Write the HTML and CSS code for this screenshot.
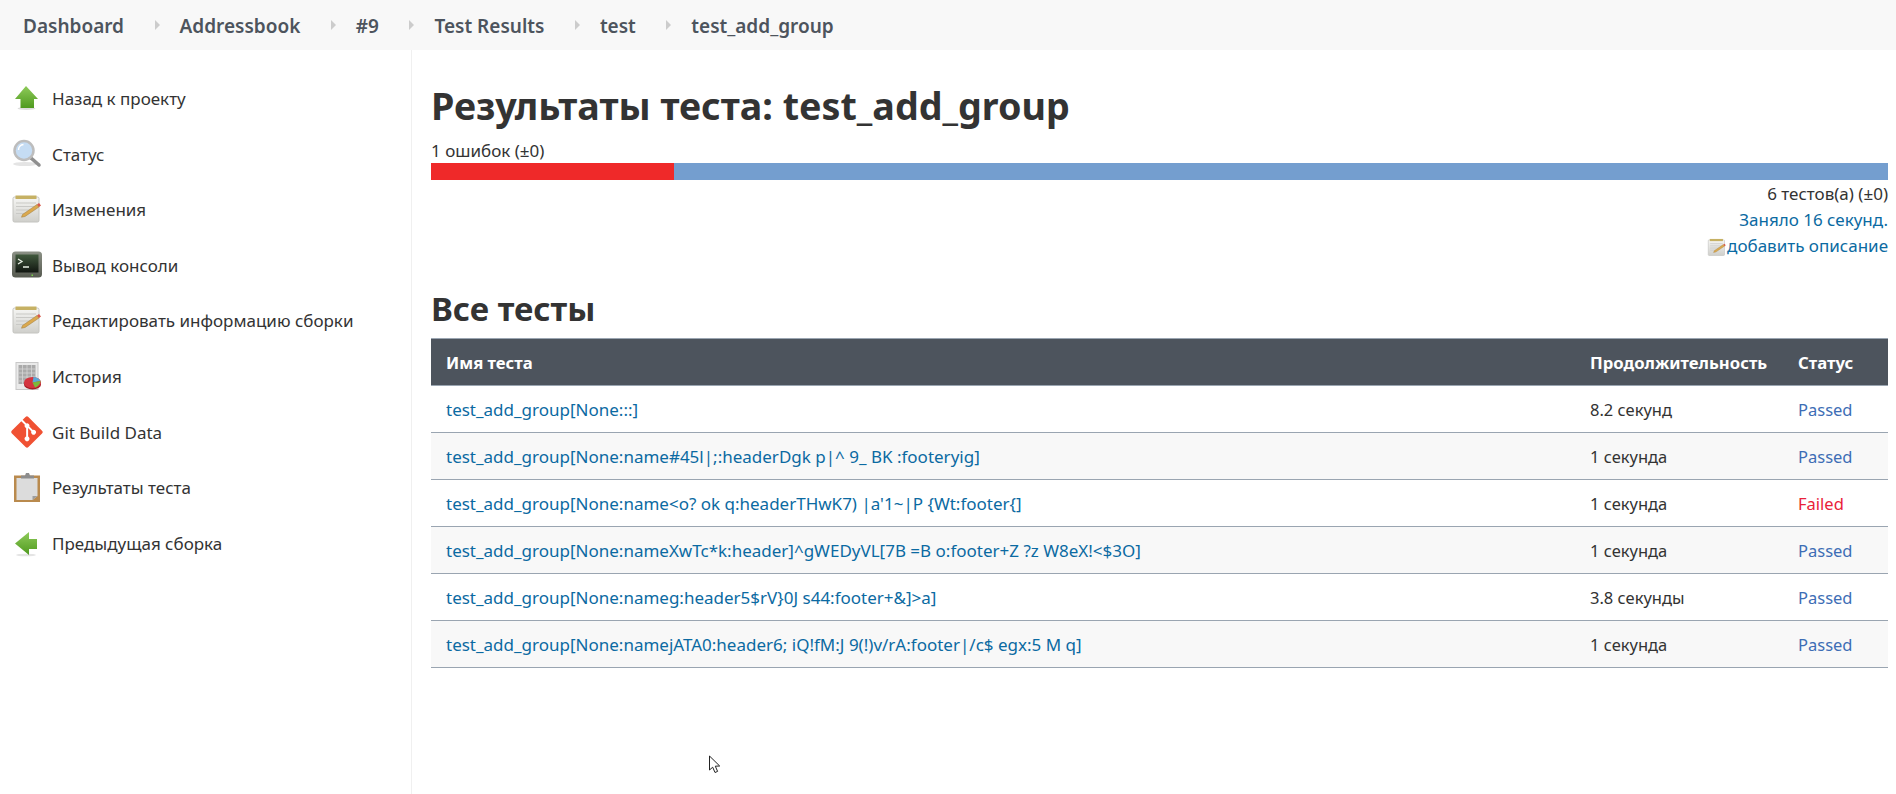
FILE: index.html
```html
<!DOCTYPE html>
<html>
<head>
  <meta charset="utf-8" />
  <title>Результаты теста: test_add_group</title>
  <link rel="stylesheet" href="styles.css">
</head>
<body>
  <!-- shared icon pieces -->
  <svg class="defs" width="0" height="0">
    <defs>
      <linearGradient id="green" x1="0" y1="0" x2="0" y2="1">
        <stop offset="0" stop-color="#8fcb5a"/>
        <stop offset="1" stop-color="#4f9a1f"/>
      </linearGradient>
      <linearGradient id="paper" x1="0" y1="0" x2="0" y2="1">
        <stop offset="0" stop-color="#f6f6f4"/>
        <stop offset="1" stop-color="#cfcfcb"/>
      </linearGradient>
      <linearGradient id="screen" x1="0" y1="0" x2="0" y2="1">
        <stop offset="0" stop-color="#41593d"/>
        <stop offset="1" stop-color="#111611"/>
      </linearGradient>
      <linearGradient id="case" x1="0" y1="0" x2="0" y2="1">
        <stop offset="0" stop-color="#8b9085"/>
        <stop offset="1" stop-color="#565a50"/>
      </linearGradient>
      <symbol id="i-notepad" viewBox="0 0 32 32">
        <rect x="2" y="3" width="26" height="25" rx="1.500" fill="url(#paper)" stroke="#c4c4c0"/>
        <rect x="4.500" y="1.500" width="21" height="3.500" fill="#c6b164"/>
        <path d="M5 9h20M5 12.500h20M5 16h15M5 19.500h9" stroke="#c9c9c6" stroke-width="1.100"/>
        <path d="M11.500 20.500 26 10.500l2 2.500-14 9.500-3.500.7z" fill="#dba94e" stroke="#9c7a3c" stroke-width=".5"/>
        <path d="M26 10.500l2-1.500 2 2.500-2 1.500z" fill="#d85a4a"/>
      </symbol>
    </defs>
  </svg>

  <nav class="topbar">
    <a class="crumb" href="#">Dashboard</a><span class="sep"></span>
    <a class="crumb" href="#">Addressbook</a><span class="sep"></span>
    <a class="crumb" href="#">#9</a><span class="sep"></span>
    <a class="crumb" href="#">Test Results</a><span class="sep"></span>
    <a class="crumb" href="#">test</a><span class="sep"></span>
    <a class="crumb" href="#">test_add_group</a>
  </nav>

  <div class="layout">
    <aside class="sidebar">
      <a class="task" href="#">
        <svg class="task-icon" viewBox="0 0 32 32"><ellipse cx="15.500" cy="25.500" rx="9" ry="1.500" fill="#ddd"/><path d="M15 3 27 16h-4v9H9.500v-9H4z" fill="url(#green)"/></svg>
        Назад к проекту
      </a>
      <a class="task" href="#">
        <svg class="task-icon" viewBox="0 0 32 32"><ellipse cx="14" cy="26" rx="12" ry="2" fill="#e4e4e4"/><path d="M20 20 28 27" stroke="#8f8f8f" stroke-width="3.500" stroke-linecap="round"/><circle cx="13" cy="12.500" r="9.500" fill="#c5dcf3" stroke="#bdbdbd" stroke-width="2.500"/><path d="M7.500 12a5.500 5.500 0 0 1 5-5.500" stroke="#fff" stroke-width="1.500" fill="none"/></svg>
        Статус
      </a>
      <a class="task" href="#">
        <svg class="task-icon"><use href="#i-notepad"/></svg>
        Изменения
      </a>
      <a class="task" href="#">
        <svg class="task-icon" viewBox="0 0 32 32"><rect x="1" y="1.500" width="30" height="26" rx="3.500" fill="url(#case)"/><rect x="4.500" y="4.500" width="23" height="18" fill="url(#screen)"/><path d="M7 9l4 2.500L7 14M12 17h6" stroke="#e8efe4" stroke-width="1.300" fill="none"/><rect x="20.500" y="24.500" width="1.500" height="1.500" fill="#7bd14a"/></svg>
        Вывод консоли
      </a>
      <a class="task" href="#">
        <svg class="task-icon"><use href="#i-notepad"/></svg>
        Редактировать информацию сборки
      </a>
      <a class="task" href="#">
        <svg class="task-icon" viewBox="0 0 32 32"><rect x="5" y="1.500" width="22" height="27" fill="#eaeaea" stroke="#c8c8c8"/><path d="M7.500 4h17v19h-17z" fill="#aaa"/><path d="M7.500 8h17M7.500 12h17M7.500 16h17M7.500 20h17M11.500 4v19M16 4v19M20.500 4v19" stroke="#d6d6d6" stroke-width=".8"/><ellipse cx="21.500" cy="23.500" rx="8.500" ry="5" fill="#a81c26"/><ellipse cx="21.500" cy="21.500" rx="8.500" ry="5.500" fill="#d4343f"/><path d="M21.500 21.500l1-5.500c3 0 6 2 7 4z" fill="#5aa8d8"/><path d="M21.500 21.500l8-1.500c.5 2-3 6-5.500 6.500z" fill="#7bb83a"/></svg>
        История
      </a>
      <a class="task" href="#">
        <svg class="task-icon" viewBox="-1 -1 94 94"><path fill="#f05133" d="M90.156 41.965 50.036 1.848a5.918 5.918 0 0 0-8.372 0l-8.328 8.332 10.566 10.566a7.030 7.030 0 0 1 7.230 1.684 7.034 7.034 0 0 1 1.669 7.277l10.187 10.184a7.028 7.028 0 0 1 7.278 1.672 7.040 7.040 0 0 1 0 9.957 7.050 7.050 0 0 1-9.965 0 7.044 7.044 0 0 1-1.528-7.660l-9.500-9.497V59.360a7.040 7.040 0 0 1 1.860 11.290 7.040 7.040 0 0 1-9.957 0 7.040 7.040 0 0 1 0-9.958 7.060 7.060 0 0 1 2.304-1.539V33.926a7.049 7.049 0 0 1-3.820-9.234L29.242 14.272 1.730 41.777a5.925 5.925 0 0 0 0 8.371L41.852 90.270a5.925 5.925 0 0 0 8.370 0l39.934-39.934a5.925 5.925 0 0 0 0-8.371"/></svg>
        Git Build Data
      </a>
      <a class="task" href="#">
        <svg class="task-icon" viewBox="0 0 32 32"><rect x="3" y="3.500" width="26" height="26.500" fill="#b98a4e"/><path d="M5.500 6h21v18l-5 4H5.500z" fill="#dcdcdc"/><path d="M21.500 28l5-4h-5z" fill="#9e9e9e"/><path d="M10 6.500V3.500h4l1-2.500h3l1 2.500h4v3z" fill="#8d8d8d"/></svg>
        Результаты теста
      </a>
      <a class="task" href="#">
        <svg class="task-icon" viewBox="0 0 32 32"><ellipse cx="15" cy="27" rx="10" ry="1.300" fill="#e4e4e4"/><path d="M4 15.500 18 4v7h8v10h-8v6z" fill="url(#green)"/></svg>
        Предыдущая сборка
      </a>
    </aside>

    <main class="content">
      <h1 class="title">Результаты теста: test_add_group</h1>
      <div class="fail-count">1 ошибок (±0)</div>
      <div class="bar"><div class="bar-fail"></div></div>
      <div class="summary">
        <div>6 тестов(а) (±0)</div>
        <div><a href="#">Заняло 16 секунд.</a></div>
        <div><a class="edit-link" href="#"><svg class="edit-icon"><use href="#i-notepad"/></svg>добавить описание</a></div>
      </div>

      <h2 class="section">Все тесты</h2>
      <table class="tests">
        <thead>
          <tr><th>Имя теста</th><th class="col-time">Продолжительность</th><th class="col-status">Статус</th></tr>
        </thead>
        <tbody>
          <tr><td><a href="#">test_add_group[None:::]</a></td><td class="cell-sm">8.2 секунд</td><td class="cell-sm passed">Passed</td></tr>
          <tr><td><a href="#">test_add_group[None:name#45l|;:headerDgk p|^ 9_ BK :footeryig]</a></td><td class="cell-sm">1 секунда</td><td class="cell-sm passed">Passed</td></tr>
          <tr><td><a href="#">test_add_group[None:name&lt;o? ok q:headerTHwK7) |a'1~|P {Wt:footer{]</a></td><td class="cell-sm">1 секунда</td><td class="cell-sm failed">Failed</td></tr>
          <tr><td><a href="#">test_add_group[None:nameXwTc*k:header]^gWEDyVL[7B =B o:footer+Z ?z W8eX!&lt;$3O]</a></td><td class="cell-sm">1 секунда</td><td class="cell-sm passed">Passed</td></tr>
          <tr><td><a href="#">test_add_group[None:nameg:header5$rV}0J s44:footer+&amp;]&gt;a]</a></td><td class="cell-sm">3.8 секунды</td><td class="cell-sm passed">Passed</td></tr>
          <tr><td><a href="#">test_add_group[None:namejATA0:header6; iQ!fM:J 9(!)v/rA:footer|/c$ egx:5 M q]</a></td><td class="cell-sm">1 секунда</td><td class="cell-sm passed">Passed</td></tr>
        </tbody>
      </table>
    </main>
  </div>

  <!-- mouse pointer caught in the screenshot -->
  <svg class="pointer" width="14" height="20" viewBox="0 0 14 20"><path d="M1.500 1v14l3.200-2.800 2.300 5.300 2.600-1.100-2.300-5.200 4.400-.2z" fill="#fff" stroke="#222" stroke-width="1"/></svg>
</body>
</html>
```

FILE: styles.css
```css
html, body {
  height: 100%;
}
body {
  margin: 0;
  font-family: "Noto Sans", sans-serif;
  font-size: 17px;
  line-height: 25.6px;
  color: #333;
  background: #fff;
  overflow: hidden;
}
a {
  color: #0b6aa2;
  text-decoration: none;
}
.defs {
  display: block;
}

/* breadcrumb bar */
.topbar {
  box-sizing: border-box;
  display: flex;
  align-items: center;
  height: 50px;
  padding: 3px 0 0 23px;
  background: #f8f8f8;
}
.crumb {
  color: #4d545d;
  font-size: 19px;
  font-weight: 600;
}
.sep {
  width: 0;
  height: 0;
  margin: -3px 20px 0 30.500px;
  border-left: 5px solid #ccc;
  border-top: 5px solid transparent;
  border-bottom: 5px solid transparent;
}

.layout {
  display: flex;
  height: 744px;
}

/* side panel */
.sidebar {
  box-sizing: border-box;
  flex: 0 0 412px;
  padding: 21px 0 0 11px;
  border-right: 1px solid #f0f0f0;
}
.task {
  display: flex;
  align-items: center;
  gap: 9px;
  height: 55.6px;
  color: #333;
}
.task-icon {
  flex: none;
  width: 32px;
  height: 32px;
}

/* main column */
.content {
  flex: 1;
  padding: 0 8px 0 19px;
}
.title {
  margin: 32px 0 0;
  font-size: 37.700px;
  line-height: 48px;
  font-weight: 700;
}
.fail-count {
  margin-top: 8px;
  height: 25px;
}
.bar {
  height: 17px;
  background: #749ecf;
}
.bar-fail {
  width: 243px;
  height: 100%;
  background: #ef2929;
}
.summary {
  padding-top: 1px;
  line-height: 26px;
  text-align: right;
}
.edit-link {
  display: inline-flex;
  align-items: center;
}
.edit-icon {
  width: 20px;
  height: 20px;
  margin-top: 4px;
}
.section {
  margin: 23px 0 0;
  font-size: 33px;
  line-height: 42px;
  font-weight: 700;
}

/* test table */
.tests {
  width: 100%;
  margin-top: 8px;
  border-collapse: collapse;
  table-layout: fixed;
}
.tests th {
  height: 45px;
  padding: 1px 15px 0;
  color: #fff;
  background: #4d545d;
  border-top: 1px solid #9aa5b1;
  border-bottom: 1px solid #9aa5b1;
  text-align: left;
  font-size: 16.700px;
  font-weight: 700;
}
.tests td {
  height: 45px;
  padding: 1px 15px 0;
  border-bottom: 1px solid #9aa5b1;
}
.tests .cell-sm {
  font-size: 16.500px;
}
.tests tbody tr:nth-child(even) {
  background: #f8f8f8;
}
.col-time {
  width: 178px;
}
.col-status {
  width: 75px;
}
.passed {
  color: #3d6db5;
}
.failed {
  color: #e9213a;
}

.pointer {
  position: absolute;
  left: 708px;
  top: 755px;
}
```
